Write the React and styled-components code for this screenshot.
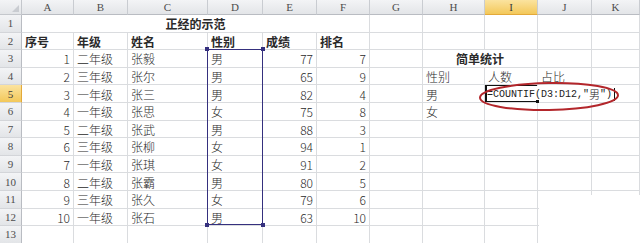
import React from "react";
import styled, { createGlobalStyle, css } from "styled-components";

const GlobalStyle = createGlobalStyle`
  html, body {
    margin: 0;
    padding: 0;
    background: #ffffff;
    overflow: hidden;
  }
`;

const COLS = ["A", "B", "C", "D", "E", "F", "G", "H", "I", "J", "K"];
const ROW_H = 17.6;
const HEAD_H = 15;

const DATA = [
  [1, "二年级", "张毅", "男", 77, 7],
  [2, "三年级", "张尔", "男", 65, 9],
  [3, "一年级", "张三", "男", 82, 4],
  [4, "一年级", "张思", "女", 75, 8],
  [5, "二年级", "张武", "男", 88, 3],
  [6, "三年级", "张柳", "女", 94, 1],
  [7, "一年级", "张琪", "女", 91, 2],
  [8, "二年级", "张霸", "男", 80, 5],
  [9, "三年级", "张久", "女", 79, 6],
  [10, "一年级", "张石", "男", 63, 10],
];

const Sheet = styled.div`
  position: relative;
  display: grid;
  grid-template-columns: 22px 52px 54px 80px 55px 54px 53px 53px 62px 53px 54px 1fr;
  grid-template-rows: ${HEAD_H}px repeat(13, ${ROW_H}px);
  width: 640px;
  height: 243px;
  overflow: hidden;
  background: #fff;
  font-family: "Noto Sans CJK SC", "Noto Sans", sans-serif;
  font-size: 12px;
  font-weight: 300;
  color: #2a2a2a;
`;

const headBg = css`
  background: linear-gradient(#f3f4f6, #e3e5e8);
  color: #4d4d4d;
  font-family: "Liberation Serif", "DejaVu Serif", serif;
  font-size: 11px;
  font-weight: 400;
`;

const Corner = styled.div`
  ${headBg};
  position: relative;
  border-right: 1px solid #c4c7cc;
  border-bottom: 1px solid #c4c7cc;
  &::after {
    content: "";
    position: absolute;
    right: 2px;
    bottom: 2px;
    border-left: 7px solid transparent;
    border-bottom: 7px solid #c9ccd1;
  }
`;

const ColHead = styled.div`
  ${headBg};
  display: flex;
  align-items: center;
  justify-content: center;
  border-right: 1px solid #c9ccd1;
  border-bottom: 1px solid #b9bcc2;
  ${(p) =>
    p.$selected &&
    css`
      background: linear-gradient(#fbe39f, #f3c85a);
      color: #3a3a3a;
      border-bottom-color: #e3a93a;
    `}
`;

const RowHead = styled(ColHead)`
  border-right: 1px solid #b9bcc2;
  border-bottom: 1px solid #d3d5d9;
  ${(p) =>
    p.$selected &&
    css`
      border-right-color: #e3a93a;
    `}
`;

const Cell = styled.div`
  grid-column: span ${(p) => p.$span || 1};
  display: flex;
  align-items: center;
  justify-content: ${(p) =>
    p.$align === "right" ? "flex-end" : p.$align === "center" ? "center" : "flex-start"};
  padding: 1px 3px 0 3px;
  border-right: 1px solid #dadcdf;
  border-bottom: 1px solid #dadcdf;
  font-weight: ${(p) => (p.$bold ? 700 : 300)};
  white-space: nowrap;
  overflow: visible;
  position: relative;
  min-width: 0;
  ${(p) =>
    p.$active &&
    css`
      z-index: 3;
      box-shadow: inset 2px 2px 0 #111;
      padding-left: 2px;
    `}
`;

const Formula = styled.span`
  position: relative;
  display: flex;
  align-items: center;
  background: #fff;
  padding-right: 2px;
  font-family: "Liberation Mono", "DejaVu Sans Mono", monospace;
  font-size: 10px;
  font-weight: 400;
  color: #222;
  &::after {
    content: "";
    width: 1px;
    height: 13px;
    margin-left: 2px;
    background: #111;
  }
`;

const FuncName = styled.span`
  position: relative;
  &::after {
    content: "";
    position: absolute;
    left: 0;
    right: -2px;
    bottom: -2px;
    height: 1px;
    background: #111;
  }
  &::before {
    content: "";
    position: absolute;
    right: -4px;
    bottom: -3px;
    width: 3px;
    height: 3px;
    background: #111;
  }
`;

const Cjk = styled.span`
  font-family: "Noto Sans CJK SC", sans-serif;
  font-size: 11px;
  font-weight: 300;
`;

const RefBox = styled.div`
  position: absolute;
  left: 207px;
  top: ${HEAD_H + 2 * ROW_H - 1}px;
  width: 56px;
  height: ${10 * ROW_H}px;
  border: 1px solid #35307e;
  box-sizing: border-box;
  pointer-events: none;
  z-index: 4;
`;

const Handle = styled.span`
  position: absolute;
  width: 4px;
  height: 4px;
  background: #35307e;
  ${(p) => (p.$top ? "top: -3px;" : "bottom: -3px;")}
  ${(p) => (p.$left ? "left: -3px;" : "right: -3px;")}
`;

const Blank = styled.div`
  position: absolute;
  left: 539px;
  top: 195px;
  width: 101px;
  height: 48px;
  background: #fff;
  z-index: 2;
`;

const Mark = styled.svg`
  position: absolute;
  left: 474px;
  top: 78px;
  z-index: 5;
  pointer-events: none;
`;

const buildRows = () => {
  const rows = [];
  rows.push([
    { text: "正经的示范", span: 6, bold: true, align: "center" },
    {}, {}, {}, {}, {},
  ]);
  rows.push([
    { text: "序号", bold: true },
    { text: "年级", bold: true },
    { text: "姓名", bold: true },
    { text: "性别", bold: true },
    { text: "成绩", bold: true },
    { text: "排名", bold: true },
    {}, {}, {}, {}, {},
  ]);
  DATA.forEach((d, i) => {
    const row = [
      { text: d[0], align: "right" },
      { text: d[1] },
      { text: d[2] },
      { text: d[3] },
      { text: d[4], align: "right" },
      { text: d[5], align: "right" },
      {},
    ];
    if (i === 0) row.push({ text: "简单统计", span: 2, bold: true, align: "center" }, {}, {});
    else if (i === 1) row.push({ text: "性别" }, { text: "人数" }, { text: "占比" }, {});
    else if (i === 2) row.push({ text: "男" }, { formula: true, active: true }, {}, {});
    else if (i === 3) row.push({ text: "女" }, {}, {}, {});
    else row.push({}, {}, {}, {});
    rows.push(row);
  });
  rows.push([{}, {}, {}, {}, {}, {}, {}, {}, {}, {}, {}]);
  return rows;
};

const App = () => {
  const rows = buildRows();
  return (
    <>
      <GlobalStyle />
      <Sheet>
        <Corner />
        {COLS.map((c) => (
          <ColHead key={c} $selected={c === "I"}>
            {c}
          </ColHead>
        ))}
        {rows.map((row, r) => (
          <React.Fragment key={r}>
            <RowHead $selected={r === 4}>{r + 1}</RowHead>
            {row.map((cell, c) => (
              <Cell
                key={c}
                $span={cell.span}
                $bold={cell.bold}
                $align={cell.align}
                $active={cell.active}
              >
                {cell.formula ? (
                  <Formula>
                    <FuncName>=COUNTIF</FuncName>(D3:D12,"<Cjk>男</Cjk>")
                  </Formula>
                ) : (
                  cell.text
                )}
              </Cell>
            ))}
          </React.Fragment>
        ))}
        <RefBox>
          <Handle $top $left />
          <Handle $top />
          <Handle $left />
          <Handle />
        </RefBox>
        <Blank />
        <Mark width="152" height="38" viewBox="0 0 152 38">
          <ellipse
            cx="75"
            cy="18.5"
            rx="69"
            ry="13.5"
            fill="none"
            stroke="#b3262b"
            strokeWidth="2"
            transform="rotate(-1 75 18.5)"
          />
        </Mark>
      </Sheet>
    </>
  );
};

export default App;
